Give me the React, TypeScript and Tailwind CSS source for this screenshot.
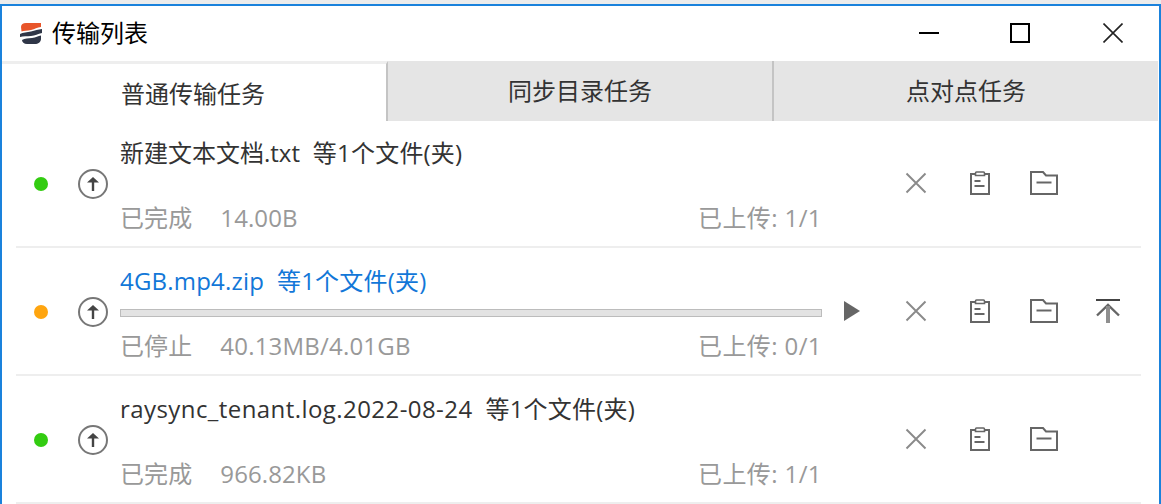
function Logo() {
  return (
    <svg width="24" height="24" viewBox="0 0 24 24" className="shrink-0">
      <path d="M3 6C3 3.5 5 2 8 2H23V6C19 6.5 17 8 13 9C9 10 6 9.5 3.5 10.5Z" fill="#e8552a" />
      <path d="M2 13C5 11 9 11.5 13 10.5C17 9.5 20 8.5 24 8V12C20 13 17 14.5 13 15C9 15.5 5 15 2 16Z" fill="#2f3647" />
      <path d="M4 19C7 17 10 17.5 14 17C18 16.5 20 15 23 14.5V18C23 21 20 23 17 23H9C6 23 4 21 4 19Z" fill="#2f3647" />
    </svg>
  );
}

function UploadCircle() {
  return (
    <svg width="30" height="30" viewBox="0 0 30 30">
      <circle cx="15" cy="15" r="14" fill="none" stroke="#777777" strokeWidth="2" />
      <path d="M15 22V12" stroke="#444444" strokeWidth="2.4" fill="none" />
      <path d="M9 13.5L15 8L21 13.5Z" fill="#444444" />
    </svg>
  );
}

function CloseIcon() {
  return (
    <svg width="22" height="22" viewBox="0 0 22 22">
      <path d="M1.5 1.5L20.5 20.5M20.5 1.5L1.5 20.5" stroke="#8a8a8a" strokeWidth="1.9" />
    </svg>
  );
}

function ClipIcon() {
  return (
    <svg width="20" height="24" viewBox="0 0 20 24" fill="none" stroke="#666666" strokeWidth="2">
      <path d="M5 3H1V23H19V3H15" />
      <path d="M5.5 4.5V2.2C5.5 1.5 6 1 6.5 1H13.5C14 1 14.5 1.5 14.5 2.2V4.5Z" strokeWidth="1.6" />
      <path d="M4.5 10H10.5M4.5 15H14.5" />
    </svg>
  );
}

function FolderIcon() {
  return (
    <svg width="28" height="24" viewBox="0 0 28 24" fill="none" stroke="#666666" strokeWidth="2">
      <path d="M1 23V1H13L16 4.5H27V23Z" />
      <path d="M6.5 11.5H21.5" />
    </svg>
  );
}

function PlayIcon() {
  return (
    <svg width="16" height="20" viewBox="0 0 16 20">
      <path d="M0 0L16 10L0 20Z" fill="#666666" />
    </svg>
  );
}

function TopIcon() {
  return (
    <svg width="24" height="24" viewBox="0 0 24 24" fill="none">
      <path d="M0 1H24" stroke="#444444" strokeWidth="2" />
      <path d="M1 16.5L12 6L23 16.5" stroke="#666666" strokeWidth="2.4" />
      <path d="M12 7V24" stroke="#8f8f8f" strokeWidth="4" />
    </svg>
  );
}

type Task = {
  name: string;
  nameClass: string;
  status: string;
  size: string;
  uploaded: string;
  dot: string;
  active?: boolean;
};

const tasks: Task[] = [
  { name: '新建文本文档.txt', nameClass: 'tracking-normal', status: '已完成', size: '14.00B', uploaded: '已上传: 1/1', dot: 'bg-[#33cc11]' },
  { name: '4GB.mp4.zip', nameClass: 'tracking-[0.2px]', status: '已停止', size: '40.13MB/4.01GB', uploaded: '已上传: 0/1', dot: 'bg-[#ffa50f]', active: true },
  { name: 'raysync_tenant.log.2022-08-24', nameClass: 'tracking-[0.43px]', status: '已完成', size: '966.82KB', uploaded: '已上传: 1/1', dot: 'bg-[#33cc11]' },
];

function TaskRow({ task }: { task: Task }) {
  return (
    <div className="flex items-center h-[128px] ml-[14px] mr-[18px] border-b-2 border-[#eeeeee] shrink-0">
      <div className={`w-[14px] h-[14px] rounded-full ml-[18px] mt-[1px] ${task.dot}`} />
      <div className="ml-[30px] mt-[1px] w-[30px] h-[30px]">
        <UploadCircle />
      </div>
      <div className="ml-[12px] w-[702px] h-[128px] flex flex-col">
        <div className={`mt-[18px] h-[32px] leading-[32px] text-[24px] whitespace-pre ${task.active ? 'text-[#1277d8]' : 'text-[#333333]'}`}>
          <span className={task.nameClass}>{task.name}</span>
          <span className="tracking-[0.2px]">{'  等1个文件(夹)'}</span>
        </div>
        <div className="mt-[12px] h-[10px]">
          {task.active && <div className="h-[8px] border border-[#bcbcbc] bg-[#e3e3e3]" />}
        </div>
        <div className="mt-[11px] flex justify-between text-[24px] leading-[32px] text-[#999999]">
          <div className="flex gap-[28px]">
            <span className="tracking-[0.1px]">{task.status}</span>
            <span className={task.active ? 'tracking-[0.2px]' : 'tracking-[0.1px]'}>{task.size}</span>
          </div>
          <span className="tracking-[0.4px]">{task.uploaded}</span>
        </div>
      </div>
      <div className="w-[38px] flex justify-center pl-[22px]">
        {task.active && <PlayIcon />}
      </div>
      <div className="ml-[45px] flex items-center">
        <CloseIcon />
        <div className="ml-[43px]"><ClipIcon /></div>
        <div className="ml-[40px]"><FolderIcon /></div>
        {task.active && <div className="ml-[38px]"><TopIcon /></div>}
      </div>
    </div>
  );
}

export default function App() {
  return (
    <div
      className="w-[1161px] h-[504px] overflow-hidden bg-white flex flex-col"
      style={{ fontFamily: '"Open Sans", "Noto Sans CJK SC", sans-serif' }}
    >
      <div className="h-[4px] bg-[#ececec] shrink-0" />
      <div className="flex-1 min-h-0 flex flex-col border-t-2 border-x-2 border-[#1a82dc]">
        <div className="h-[55px] pb-[2px] flex items-center shrink-0">
          <div className="ml-[16px]"><Logo /></div>
          <span className="ml-[10px] text-[24px] text-black">传输列表</span>
          <div className="ml-auto flex items-center">
            <div className="w-[20px] h-[2px] bg-black" />
            <div className="ml-[71px] w-[20px] h-[20px] border-2 border-black" />
            <svg className="ml-[73px] mr-[36px]" width="20" height="20" viewBox="0 0 20 20">
              <path d="M0.5 0.5L19.5 19.5M19.5 0.5L0.5 19.5" stroke="#222222" strokeWidth="1.6" />
            </svg>
          </div>
        </div>
        <div className="h-[60px] flex shrink-0 text-[24px] text-[#333333]">
          <div className="w-[386px] border-t-[3px] border-[#eeeeee] border-r-2 border-r-[#c4c4c4] bg-white flex items-center justify-center pt-[3px] pr-[2px]">
            普通传输任务
          </div>
          <div className="w-[386px] bg-[#e5e5e5] border-r-2 border-[#c4c4c4] flex items-center justify-center">
            同步目录任务
          </div>
          <div className="flex-1 bg-[#e5e5e5] flex items-center justify-center mr-[1px]">
            点对点任务
          </div>
        </div>
        <div className="-mt-[1px] flex flex-col">
          {tasks.map(task => (
            <TaskRow key={task.name} task={task} />
          ))}
        </div>
      </div>
    </div>
  );
}
